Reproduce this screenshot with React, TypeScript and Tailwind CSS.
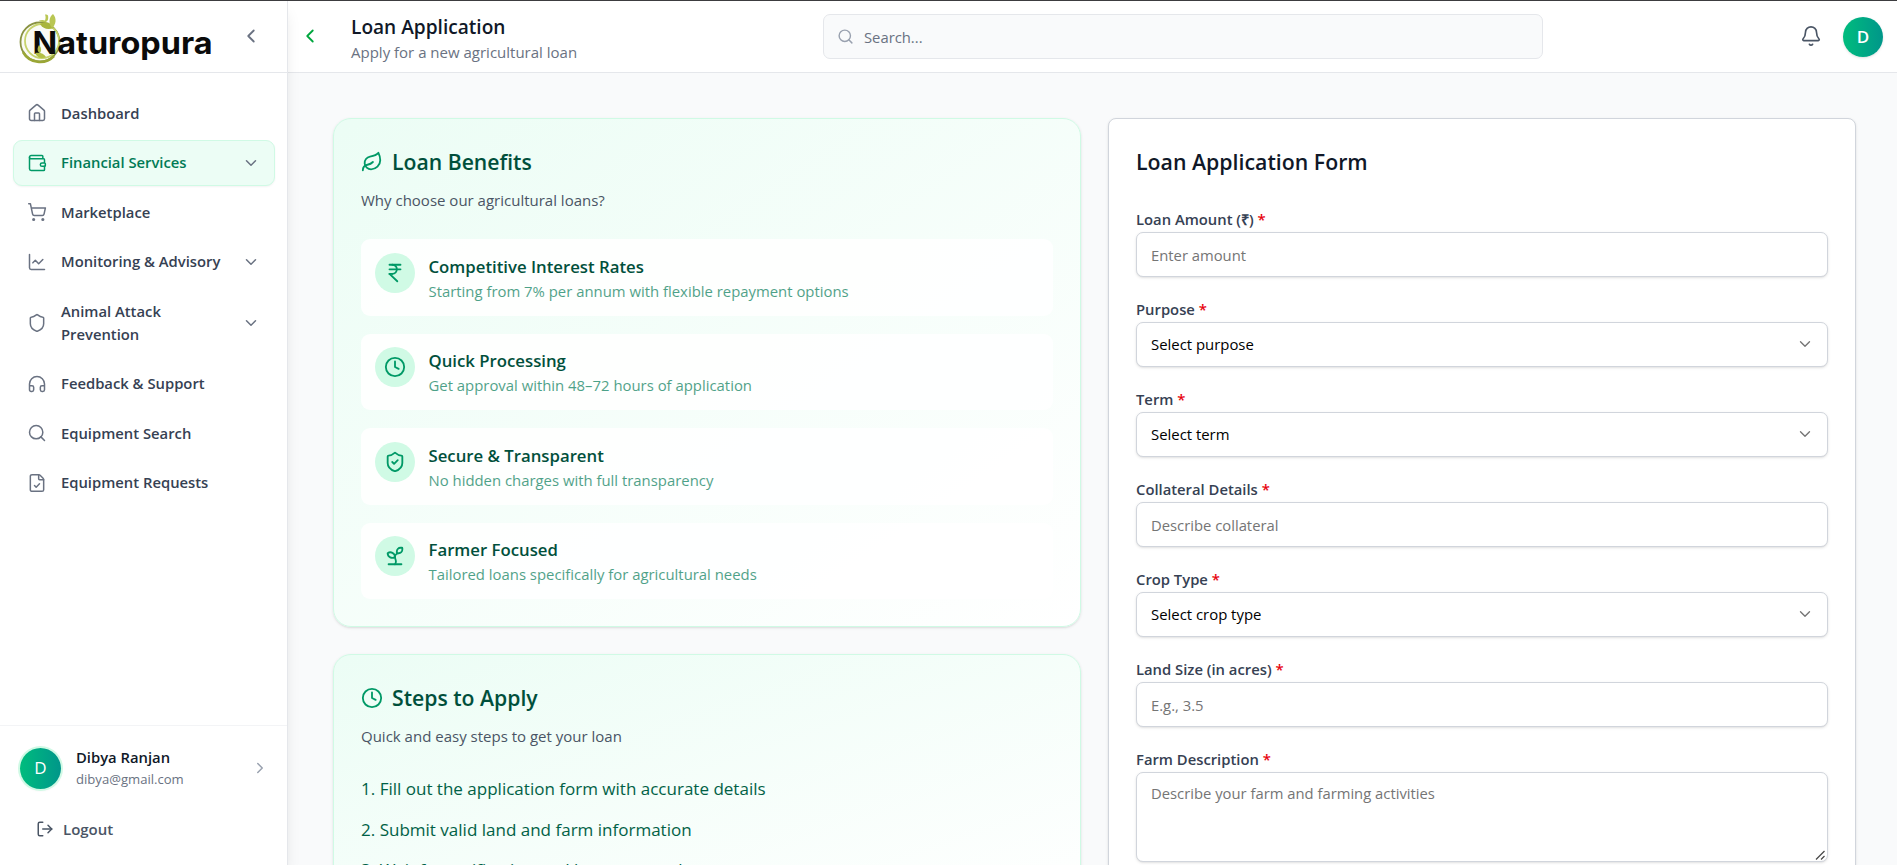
import React from "react";
import {
  Bell, ChartLine, ChevronDown, ChevronLeft, ChevronRight, Clock, FileCheck, Headphones, House,
  IndianRupee, Leaf, Search, Shield, ShieldCheck, ShoppingCart, Sprout, Wallet,
} from "lucide-react";
import { LuLogOut } from "react-icons/lu";

type IconType = React.ComponentType<{ className?: string; strokeWidth?: number }>;

function Logo() {
  return (
    <svg viewBox="0 0 200 54" className="h-[54px] w-[200px] shrink-0" aria-label="Naturopura">
      <circle cx="24" cy="32" r="19.5" fill="#fafbf4" stroke="#8a9342" strokeWidth="1.8" />
      <circle cx="26" cy="31" r="17" fill="none" stroke="#c7d36c" strokeWidth="1.8" />
      <path d="M7 42a19.5 19.5 0 0 0 31 4" fill="none" stroke="#9aa636" strokeWidth="2.6" />
      <path d="M24 14c5-3 11-2 14 4-6 2-11 1-14-4Z" fill="#a9b53c" />
      <path d="M36 18c-4-5-3-11 1-14 4 4 3 11-1 14Z" fill="#b9c653" />
      <path d="M23 10.500c3-1 5-.5 6 0 .8-2 .8-4 0-6 1.500 0 3 .5 3 1 .8 4-.5 6.500-3 6.500-3 0-5 0-6-1.500Z" fill="#b9c653" />
      <text
        x="16.500"
        y="43.500"
        fontSize="31"
        fill="#0b0b0b"
        textLength="180"
        lengthAdjust="spacingAndGlyphs"
        className="font-[Inter,sans-serif] font-bold"
      >
        Naturopura
      </text>
      <path d="M23 35c2 2 3 5 1 8-3-1-3-5-1-8Z" fill="#b3bf45" />
      <path d="M19 43c4-1 9 0 11 4-4 2-9 1-11-4Z" fill="#b3bf45" />
    </svg>
  );
}

const nav: { lines: string[]; icon: IconType; active?: boolean; more?: boolean }[] = [
  { lines: ["Dashboard"], icon: House },
  { lines: ["Financial Services"], icon: Wallet, active: true, more: true },
  { lines: ["Marketplace"], icon: ShoppingCart },
  { lines: ["Monitoring & Advisory"], icon: ChartLine, more: true },
  { lines: ["Animal Attack", "Prevention"], icon: Shield, more: true },
  { lines: ["Feedback & Support"], icon: Headphones },
  { lines: ["Equipment Search"], icon: Search },
  { lines: ["Equipment Requests"], icon: FileCheck },
];

function Sidebar() {
  return (
    <aside className="relative z-10 flex w-[288px] shrink-0 flex-col border-r border-gray-200 bg-white shadow-lg">
      <div className="flex h-[72px] shrink-0 items-center justify-between border-b border-gray-200 pl-4 pr-[25px]">
        <Logo />
        <ChevronLeft className="mb-px size-[22px] text-gray-500" strokeWidth={2} />
      </div>
      <nav className="flex flex-1 flex-col gap-[3.4px] pl-[13px] pr-[12px] pt-[17px]">
        {nav.map(({ lines, icon: Icon, active, more }) => (
          <a
            key={lines[0]}
            className={
              active
                ? "flex min-h-[46.2px] items-center rounded-[9px] border border-emerald-100 bg-emerald-50 px-[13px] py-[10.5px] text-emerald-700 shadow-xs"
                : "flex min-h-[46.2px] items-center rounded-[9px] border border-transparent px-[13px] py-[10.5px] text-gray-700"
            }
          >
            <Icon className={active ? "size-5 shrink-0 text-emerald-600" : "size-5 shrink-0 text-gray-500"} strokeWidth={1.8} />
            <span className="ml-[14px] flex-1 text-[14.8px] leading-[23px] font-semibold">
              {lines.map((line) => (
                <span key={line} className="block whitespace-nowrap">{line}</span>
              ))}
            </span>
            {more && <ChevronDown className="mr-[1px] size-[18px] shrink-0 text-gray-500" />}
          </a>
        ))}
      </nav>
      <div className="h-[140px] shrink-0 border-t border-gray-100 px-5">
        <div className="mt-5 flex items-center">
          <div className="flex size-[41px] items-center justify-center rounded-full bg-linear-to-r from-emerald-500 to-teal-600 text-[17px] text-white shadow-sm ring-2 ring-emerald-100">D</div>
          <div className="ml-[15px] flex-1 pt-px">
            <div className="text-[14.8px] leading-[21px] font-semibold text-gray-900">Dibya Ranjan</div>
            <div className="text-[13.1px] leading-[22px] text-gray-500">dibya@gmail.com</div>
          </div>
          <ChevronRight className="-mr-[2px] mb-px size-[18px] text-gray-400" />
        </div>
        <div className="mt-[28px] flex items-center pl-4 text-gray-600">
          <LuLogOut className="size-[18px]" />
          <span className="ml-[9px] text-[15px] leading-[22px] font-semibold">Logout</span>
        </div>
      </div>
    </aside>
  );
}

function Header() {
  return (
    <header className="flex h-[72px] shrink-0 items-center border-b border-gray-200 bg-white pr-[14px]">
      <ChevronLeft className="mb-px ml-[11px] size-[22px] text-green-600" />
      <div className="ml-[30px] w-[472px] pt-[5px]">
        <h1 className="text-[19.1px] leading-[27px] font-semibold text-gray-900">Loan Application</h1>
        <p className="text-[15px] leading-[23px] text-gray-500">Apply for a new agricultural loan</p>
      </div>
      <div className="flex h-[45px] w-[720px] items-center rounded-[7px] border border-gray-200 bg-gray-50 pl-[13px]">
        <Search className="size-[17px] text-gray-400" />
        <span className="ml-[10px] pt-px text-[14.8px] text-gray-500">Search...</span>
      </div>
      <Bell className="mb-px ml-auto size-[22px] text-gray-600" strokeWidth={1.8} />
      <div className="ml-[21px] flex size-10 items-center justify-center rounded-full bg-linear-to-r from-emerald-500 to-teal-600 text-[17px] font-semibold text-white shadow-sm">D</div>
    </header>
  );
}

const benefits: { title: string; text: string; icon: IconType }[] = [
  { title: "Competitive Interest Rates", text: "Starting from 7% per annum with flexible repayment options", icon: IndianRupee },
  { title: "Quick Processing", text: "Get approval within 48–72 hours of application", icon: Clock },
  { title: "Secure & Transparent", text: "No hidden charges with full transparency", icon: ShieldCheck },
  { title: "Farmer Focused", text: "Tailored loans specifically for agricultural needs", icon: Sprout },
];

const steps = [
  "Fill out the application form with accurate details",
  "Submit valid land and farm information",
  "Wait for verification and loan approval",
];

function InfoCard({ icon: Icon, title, subtitle, children }: { icon: IconType; title: string; subtitle: string; children: React.ReactNode }) {
  return (
    <section className="rounded-[18px] border border-emerald-100 bg-linear-to-br from-emerald-50 to-white px-[27px] pb-[27px] pt-[27px] shadow-sm">
      <div className="flex h-[32px] items-center gap-[9px]">
        <Icon className="size-[22px] text-emerald-600" />
        <h2 className="-mt-px text-[21.2px] leading-[30px] font-semibold text-emerald-900">{title}</h2>
      </div>
      <p className="mt-[11px] text-[15px] leading-[22px] text-gray-600">{subtitle}</p>
      {children}
    </section>
  );
}

function Field({ label, placeholder, kind = "input" }: { label: string; placeholder: string; kind?: "input" | "select" | "textarea" }) {
  return (
    <div className="flex flex-col">
      <label className="h-[23px] text-[14.8px] leading-[20px] font-semibold text-gray-700">
        {label} <span className="text-red-600">*</span>
      </label>
      {kind === "textarea" ? (
        <div className="relative">
          <textarea placeholder={placeholder} className="block h-[90px] w-full resize-none rounded-[7px] border border-gray-300 bg-white px-[14px] py-[9px] text-[14.8px] leading-[23px] shadow-sm placeholder:text-[#757575]" />
          <svg viewBox="0 0 10 10" className="absolute right-[3px] bottom-[2px] size-[10px]" fill="none" stroke="#4b4b4b" strokeWidth="1.3">
            <path d="M1 9.500 9.500 1M6 9.500 9.500 6" />
          </svg>
        </div>
      ) : kind === "select" ? (
        <div className="flex h-[45px] items-center justify-between rounded-[7px] border border-gray-300 bg-white pl-[14px] pr-[13px] text-[14.9px] text-black shadow-sm">
          {placeholder}
          <ChevronDown className="mb-px size-[18px] text-[#757575]" strokeWidth={1.8} />
        </div>
      ) : (
        <input placeholder={placeholder} className="block h-[45px] w-full rounded-[7px] border border-gray-300 bg-white px-[14px] text-[14.8px] shadow-sm placeholder:text-[#757575]" />
      )}
    </div>
  );
}

export default function App() {
  return (
    <div className="flex h-[865px] flex-col overflow-hidden border-t border-[#3c3c3f] bg-gray-50 font-['Open_Sans',sans-serif]">
      <div className="flex min-h-0 flex-1">
        <Sidebar />
        <div className="flex min-w-0 flex-1 flex-col">
          <Header />
          <main className="grid min-h-0 flex-1 grid-cols-2 items-start gap-[27px] overflow-hidden pl-[45px] pr-[41px] pt-[45px]">
            <div className="flex flex-col gap-[27px]">
              <InfoCard icon={Leaf} title="Loan Benefits" subtitle="Why choose our agricultural loans?">
                <div className="mt-[28px] flex flex-col gap-[18px]">
                  {benefits.map(({ title, text, icon: Icon }) => (
                    <div key={title} className="flex h-[76.5px] items-start gap-[14px] rounded-[9px] bg-white/90 p-[13.5px]">
                      <div className="flex size-10 shrink-0 items-center justify-center rounded-full bg-emerald-100">
                        <Icon className="size-[22px] text-emerald-600" />
                      </div>
                      <div>
                        <h3 className="text-[16.75px] leading-[27px] font-semibold text-emerald-900">{title}</h3>
                        <p className="text-[14.88px] leading-[22px] text-emerald-700/70">{text}</p>
                      </div>
                    </div>
                  ))}
                </div>
              </InfoCard>
              <InfoCard icon={Clock} title="Steps to Apply" subtitle="Quick and easy steps to get your loan">
                <ol className="mt-[28px] flex flex-col gap-[13.5px] text-[17.02px] leading-[27px] text-emerald-800">
                  {steps.map((step, i) => (
                    <li key={step}>{i + 1}. {step}</li>
                  ))}
                </ol>
              </InfoCard>
            </div>
            <section className="rounded-[8px] border border-gray-300 bg-white px-[27px] pt-[26px] pb-7 shadow-sm">
              <h2 className="text-[21.3px] leading-[33px] font-semibold text-gray-900">Loan Application Form</h2>
              <form className="mt-[31px] flex flex-col gap-[22px]">
                <Field label="Loan Amount (₹)" placeholder="Enter amount" />
                <Field label="Purpose" placeholder="Select purpose" kind="select" />
                <Field label="Term" placeholder="Select term" kind="select" />
                <Field label="Collateral Details" placeholder="Describe collateral" />
                <Field label="Crop Type" placeholder="Select crop type" kind="select" />
                <Field label="Land Size (in acres)" placeholder="E.g., 3.5" />
                <Field label="Farm Description" placeholder="Describe your farm and farming activities" kind="textarea" />
              </form>
            </section>
          </main>
        </div>
      </div>
    </div>
  );
}
